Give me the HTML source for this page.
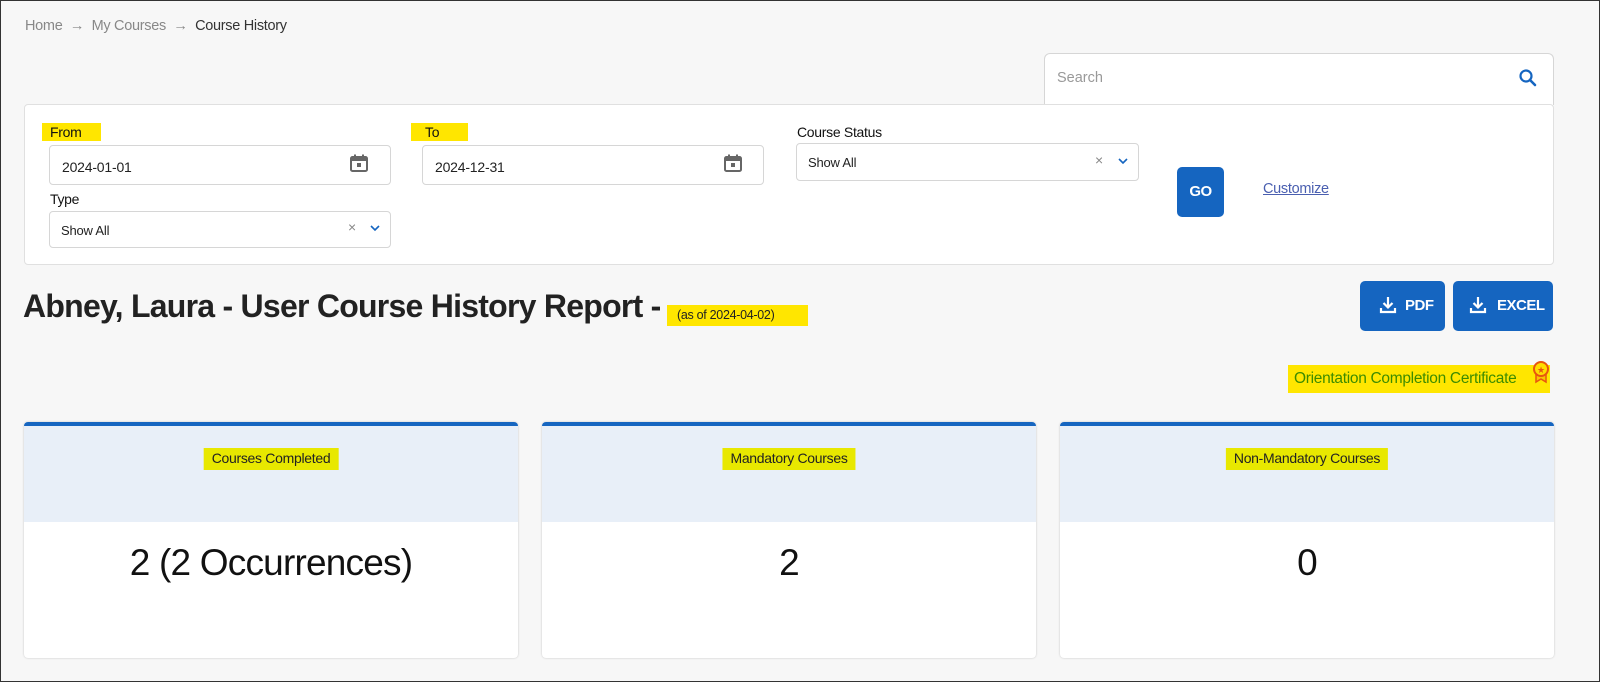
<!DOCTYPE html>
<html><head><style>
*{box-sizing:border-box;margin:0;padding:0}
body{width:1600px;height:682px;background:#f7f7f7;font-family:"Liberation Sans",sans-serif;position:relative;overflow:hidden;border:1px solid #333;}
.a{position:absolute;white-space:nowrap}
.hl{background:#ffe600}
.box{position:absolute;background:#fff;border:1px solid #d6d6d6;border-radius:4px}
.lbl{font-size:14px;color:#111;letter-spacing:-0.3px}
.val{font-size:13.5px;color:#222;letter-spacing:-0.2px}
.btn{position:absolute;background:#1565c0;border-radius:5px;color:#fff;font-weight:bold;font-size:15px;letter-spacing:-0.5px}
.card{position:absolute;top:421px;width:494px;height:236px;background:#fff;border-radius:4px;box-shadow:0 0 2px rgba(0,0,0,.2);overflow:hidden}
.card .h{height:100px;background:#e8eff8;border-top:4px solid #1565c0;position:relative}
.card .h span{position:absolute;top:22px;left:50%;transform:translateX(-50%);background:#e8e800;font-size:14px;padding:2px 8px 4px;letter-spacing:-0.3px;color:#222}
.card .n{text-align:center;font-size:37px;color:#111;margin-top:20px;letter-spacing:-0.8px}
</style></head><body>
<div class="a" style="left:24px;top:17px;font-size:14.5px;color:#888;letter-spacing:-0.3px">Home &nbsp;→&nbsp; My Courses &nbsp;→&nbsp; <span style="color:#333">Course History</span></div>

<div class="box" style="left:1043px;top:52px;width:510px;height:52px;border-radius:6px 6px 0 0;border-bottom:none"></div>
<div class="a" style="left:1056px;top:69px;font-size:14.5px;color:#999">Search</div>
<svg class="a" style="left:1517px;top:67px" width="20" height="20" viewBox="0 0 20 20"><circle cx="8" cy="8" r="5.5" fill="none" stroke="#1565c0" stroke-width="2.2"/><path d="M12 12l5 5" stroke="#1565c0" stroke-width="2.6" stroke-linecap="round"/></svg>

<div class="box" style="left:23px;top:103px;width:1530px;height:161px;border-color:#e0e0e0"></div>
<div class="a hl lbl" style="left:41px;top:122px;width:59px;height:18px;padding:1px 8px">From</div>
<div class="a hl lbl" style="left:410px;top:122px;width:57px;height:18px;padding:1px 14px">To</div>
<div class="a lbl" style="left:796px;top:123px">Course Status</div>
<div class="a lbl" style="left:49px;top:190px">Type</div>

<div class="box" style="left:48px;top:144px;width:342px;height:40px"></div>
<div class="a val" style="left:61px;top:158px;font-size:14px">2024-01-01</div>
<div class="box" style="left:421px;top:144px;width:342px;height:40px"></div>
<div class="a val" style="left:434px;top:158px;font-size:14px">2024-12-31</div>
<svg class="a" style="left:348px;top:152px" width="20" height="20" viewBox="0 0 20 20"><rect x="2" y="4" width="16" height="14" rx="1.5" fill="none" stroke="#666" stroke-width="2"/><rect x="2" y="4" width="16" height="4" fill="#666"/><rect x="5" y="1.5" width="2" height="4" fill="#666"/><rect x="13" y="1.5" width="2" height="4" fill="#666"/><rect x="8" y="10" width="4" height="4" fill="#666"/></svg>
<svg class="a" style="left:722px;top:152px" width="20" height="20" viewBox="0 0 20 20"><rect x="2" y="4" width="16" height="14" rx="1.5" fill="none" stroke="#666" stroke-width="2"/><rect x="2" y="4" width="16" height="4" fill="#666"/><rect x="5" y="1.5" width="2" height="4" fill="#666"/><rect x="13" y="1.5" width="2" height="4" fill="#666"/><rect x="8" y="10" width="4" height="4" fill="#666"/></svg>

<div class="box" style="left:795px;top:142px;width:343px;height:38px"></div>
<div class="a val" style="left:807px;top:154px;font-size:13px">Show All</div>
<div class="a" style="left:1094px;top:151px;font-size:14px;color:#888">×</div>
<svg class="a" style="left:1117px;top:157px" width="10" height="7"><path d="M1 1l4 4 4-4" fill="none" stroke="#1565c0" stroke-width="1.6"/></svg>
<div class="box" style="left:48px;top:210px;width:342px;height:37px"></div>
<div class="a val" style="left:60px;top:222px;font-size:13px">Show All</div>
<div class="a" style="left:347px;top:218px;font-size:14px;color:#888">×</div>
<svg class="a" style="left:369px;top:224px" width="10" height="7"><path d="M1 1l4 4 4-4" fill="none" stroke="#1565c0" stroke-width="1.6"/></svg>

<div class="btn" style="left:1176px;top:166px;width:47px;height:50px;line-height:50px;text-align:center">GO</div>
<div class="a" style="left:1262px;top:180px;font-size:14.5px;color:#4a5fb0;text-decoration:underline;letter-spacing:-0.3px">Customize</div>

<div class="a" style="left:22px;top:287px;font-size:32px;font-weight:bold;color:#222;letter-spacing:-0.75px">Abney, Laura - User Course History Report -</div>
<div class="a hl" style="left:666px;top:304px;width:141px;height:21px;font-size:12.5px;color:#222;padding:3px 0 0 10px;letter-spacing:-0.3px">(as of 2024-04-02)</div>

<div class="btn" style="left:1359px;top:280px;width:85px;height:50px"><svg class="a" style="left:19px;top:15px" width="18" height="18" viewBox="0 0 18 18"><path d="M9 1v10M4.5 7l4.5 4.5L13.5 7M2 12v4h14v-4" fill="none" stroke="#fff" stroke-width="2.2"/></svg><span class="a" style="left:45px;top:16px">PDF</span></div>
<div class="btn" style="left:1452px;top:280px;width:100px;height:50px"><svg class="a" style="left:16px;top:15px" width="18" height="18" viewBox="0 0 18 18"><path d="M9 1v10M4.5 7l4.5 4.5L13.5 7M2 12v4h14v-4" fill="none" stroke="#fff" stroke-width="2.2"/></svg><span class="a" style="left:44px;top:16px">EXCEL</span></div>

<div class="a hl" style="left:1287px;top:364px;width:262px;height:28px;font-size:15.5px;color:#3d8c00;padding:5px 0 0 6px;letter-spacing:-0.3px">Orientation Completion Certificate</div>
<svg class="a" style="left:1530px;top:359px" width="20" height="24" viewBox="0 0 20 24"><path d="M5 13v9l5-3 5 3v-9" fill="#f7c600" stroke="#e8550f" stroke-width="1.5"/><circle cx="10" cy="9" r="7" fill="#ffdd00" stroke="#e8550f" stroke-width="2"/><text x="10" y="13" font-size="9" text-anchor="middle" fill="#e8550f">★</text></svg>

<div class="card" style="left:23px"><div class="h"><span>Courses Completed</span></div><div class="n">2 (2 Occurrences)</div></div>
<div class="card" style="left:541px"><div class="h"><span>Mandatory Courses</span></div><div class="n">2</div></div>
<div class="card" style="left:1059px"><div class="h"><span>Non-Mandatory Courses</span></div><div class="n">0</div></div>
</body></html>
